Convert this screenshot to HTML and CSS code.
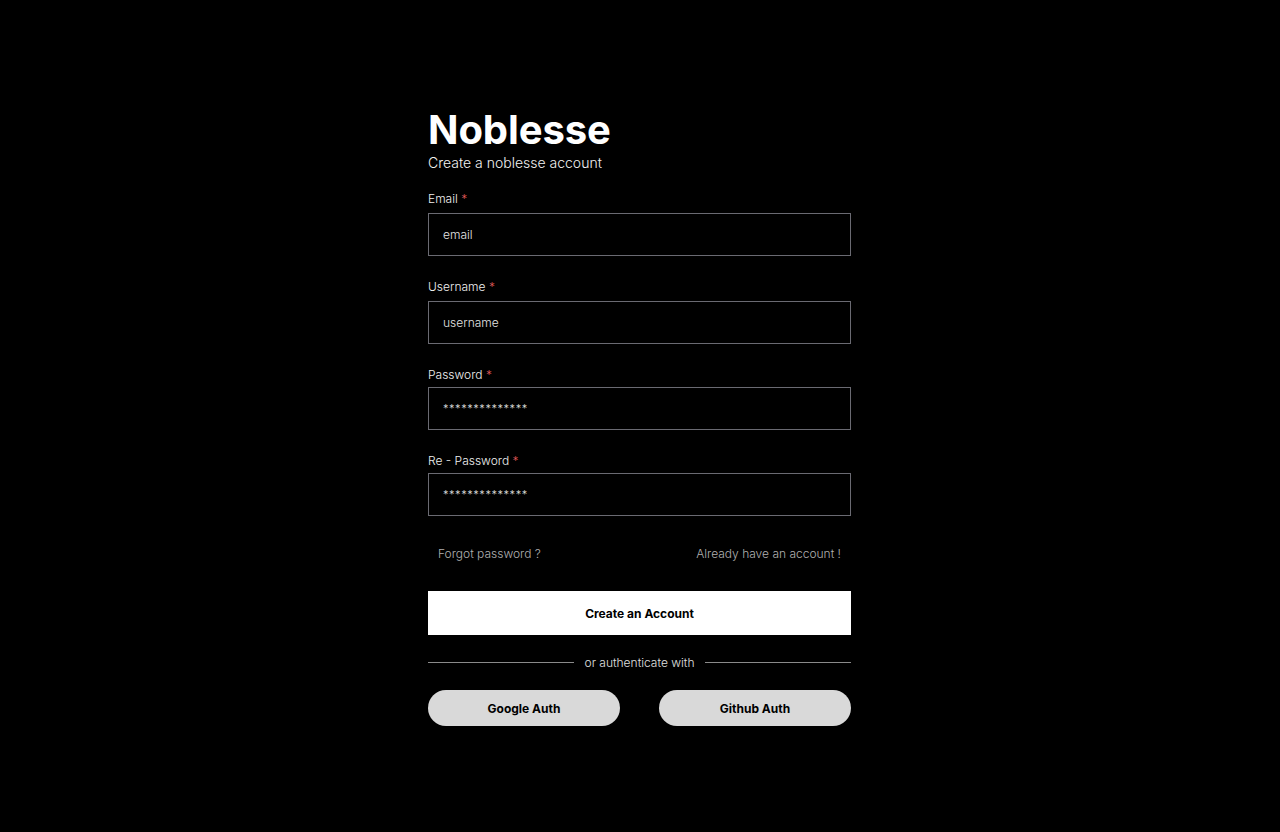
FILE: index.html
```html
<!DOCTYPE html>
<html lang="en">
<head>
<meta charset="utf-8">
<title>Noblesse - Sign up</title>
<link rel="stylesheet" href="styles.css">
</head>
<body>
<main class="page">
  <form class="card">
    <h1 class="title">Noblesse</h1>
    <p class="subtitle">Create a noblesse account</p>

    <div class="fields">
      <div class="field">
        <label class="label">Email <span class="req">*</span></label>
        <div class="input">email</div>
      </div>
      <div class="field">
        <label class="label">Username <span class="req">*</span></label>
        <div class="input">username</div>
      </div>
      <div class="field field--tight">
        <label class="label">Password <span class="req">*</span></label>
        <div class="input input--secret">**************</div>
      </div>
      <div class="field field--tight">
        <label class="label">Re - Password <span class="req">*</span></label>
        <div class="input input--secret">**************</div>
      </div>
    </div>

    <div class="links">
      <a class="link">Forgot password ?</a>
      <a class="link">Already have an account !</a>
    </div>

    <button type="button" class="primary">Create an Account</button>

    <div class="divider"><span class="line"></span><span class="divider-text">or authenticate with</span><span class="line"></span></div>

    <div class="social">
      <button type="button" class="pill">Google Auth</button>
      <button type="button" class="pill">Github Auth</button>
    </div>
  </form>
</main>
</body>
</html>
```
FILE: styles.css
```css
* { box-sizing: border-box; }
html, body {
  margin: 0;
  padding: 0;
  background: #000;
  height: 100%;
}
body {
  font-family: Inter, "Noto Sans", "Liberation Sans", sans-serif;
  color: #fff;
}
.page {
  display: flex;
  justify-content: center;
  padding-top: 106px;
}
.card {
  width: 423px;
  margin-right: 1px;
  display: flex;
  flex-direction: column;
}
.title {
  margin: 0;
  font-size: 40px;
  line-height: 48px;
  font-weight: 700;
  letter-spacing: -0.1px;
}
.subtitle {
  margin: 0;
  font-size: 14px;
  line-height: 17px;
  font-weight: 300;
  color: #f2f2f2;
}
.fields {
  margin-top: 20px;
  display: flex;
  flex-direction: column;
  gap: 23px;
}
.field {
  display: flex;
  flex-direction: column;
  gap: 7px;
}
.field--tight { gap: 5px; }
.label {
  font-size: 12px;
  line-height: 15px;
  font-weight: 300;
  color: #f0f0f0;
}
.req { color: #e05a5a; }
.input {
  height: 43px;
  border: 1px solid #6a6a72;
  padding: 0 14px;
  display: flex;
  align-items: center;
  font-size: 12px;
  font-weight: 300;
  color: #e4e4e4;
}
.input--secret {
  font-size: 11px;
  letter-spacing: 0.55px;
  padding-top: 1px;
}
.links {
  margin-top: 30px;
  padding: 0 10px;
  display: flex;
  justify-content: space-between;
}
.link {
  font-size: 12px;
  line-height: 15px;
  font-weight: 300;
  color: #b0b0b0;
  cursor: pointer;
}
.primary {
  margin-top: 30px;
  height: 44px;
  border: 0;
  background: #fff;
  color: #000;
  font-family: inherit;
  font-size: 12px;
  font-weight: 700;
}
.divider {
  margin-top: 20px;
  display: flex;
  align-items: center;
  gap: 11px;
}
.line {
  flex: 1;
  height: 1px;
  background: #8a8a8a;
}
.divider-text {
  font-size: 12px;
  line-height: 15px;
  font-weight: 300;
  color: #e0e0e0;
}
.social {
  margin-top: 20px;
  display: flex;
  justify-content: space-between;
}
.pill {
  width: 192px;
  height: 36px;
  border: 0;
  border-radius: 18px;
  background: #d9d9d9;
  color: #000;
  font-family: inherit;
  font-size: 12px;
  font-weight: 700;
}
```
